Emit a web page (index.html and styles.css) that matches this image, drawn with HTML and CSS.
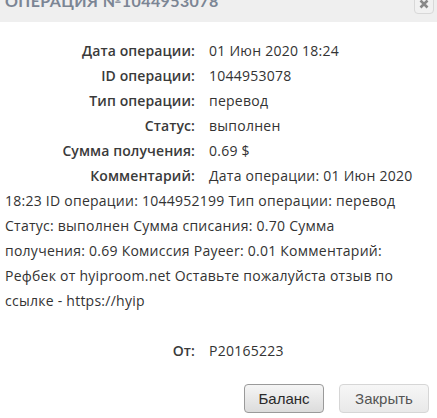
FILE: index.html
```html
<!DOCTYPE html>
<html lang="ru">
<head>
<meta charset="utf-8">
<link rel="stylesheet" href="styles.css">
</head>
<body>
<div class="dialog">
  <div class="header">
    <div class="title">ОПЕРАЦИЯ №1044953078</div>
    <button class="close" aria-label="close">
      <svg width="10" height="10" viewBox="0 0 10 10"><path d="M1.5 1.5 L8.5 8.5 M8.5 1.5 L1.5 8.5" stroke="#888" stroke-width="2.6" stroke-linecap="butt"/></svg>
    </button>
  </div>
  <div class="content">
    <div class="row"><span class="label">Дата операции:</span><span class="value">01 Июн 2020 18:24</span></div>
    <div class="row"><span class="label">ID операции:</span><span class="value">1044953078</span></div>
    <div class="row"><span class="label">Тип операции:</span><span class="value">перевод</span></div>
    <div class="row"><span class="label">Статус:</span><span class="value">выполнен</span></div>
    <div class="row"><span class="label">Сумма получения:</span><span class="value">0.69 $</span></div>
    <div class="row"><span class="label">Комментарий:</span>Дата операции: 01 Июн 2020 18:23 ID операции: 1044952199 Тип операции: перевод Статус: выполнен Сумма списания: 0.70 Сумма получения: 0.69 Комиссия Payeer: 0.01 Комментарий: Рефбек от hyiproom.net Оставьте пожалуйста отзыв по ссылке - https://hyip</div>
    <div class="row from"><span class="label">От:</span><span class="value">P20165223</span></div>
  </div>
  <div class="buttons">
    <button class="btn primary">Баланс</button>
    <button class="btn">Закрыть</button>
  </div>
</div>
</body>
</html>
```
FILE: styles.css
```css
html, body {
  margin: 0;
  padding: 0;
  background: #fff;
}
.dialog {
  width: 437px;
  font-family: "Open Sans", "Liberation Sans", sans-serif;
  color: #333;
}
.header {
  margin-top: -12px;
  height: 34px;
  background: #efefef;
  display: flex;
  justify-content: space-between;
  align-items: flex-start;
  padding: 0 3px 0 5px;
}
.title {
  font-family: "Lato", "Open Sans", sans-serif;
  font-weight: 700;
  font-size: 16px;
  line-height: 26px;
  letter-spacing: 0.4px;
  color: #7b8594;
}
.close {
  margin-top: 6px;
  width: 20px;
  height: 20px;
  padding: 0;
  border: 1px solid #d8d8d8;
  border-radius: 4px;
  background: #f1f1f1;
  display: flex;
  align-items: center;
  justify-content: center;
}
.content {
  padding: 16px 19px 0 5px;
  font-size: 14px;
  line-height: 25px;
  letter-spacing: 0.25px;
}
.label {
  display: inline-block;
  width: 190px;
  text-align: right;
  margin-right: 14px;
  font-weight: 600;
  letter-spacing: 0.1px;
  color: #3a3a3a;
}
.from {
  margin-top: 25px;
}
.buttons {
  display: flex;
  justify-content: flex-end;
  gap: 15px;
  padding: 21px 8px 0 0;
}
.btn {
  width: 90px;
  height: 29px;
  font-family: "Liberation Sans", Arial, sans-serif;
  font-size: 15px;
  color: #555;
  border: 1px solid #d6d6d6;
  border-radius: 4px;
  background: linear-gradient(#f6f6f6, #e9e9e9);
  padding: 0;
}
.btn.primary {
  width: 80px;
  color: #2a2a2a;
  border-color: #9a9a9a;
  background: linear-gradient(#f5f5f5, #dcdcdc);
}
```
